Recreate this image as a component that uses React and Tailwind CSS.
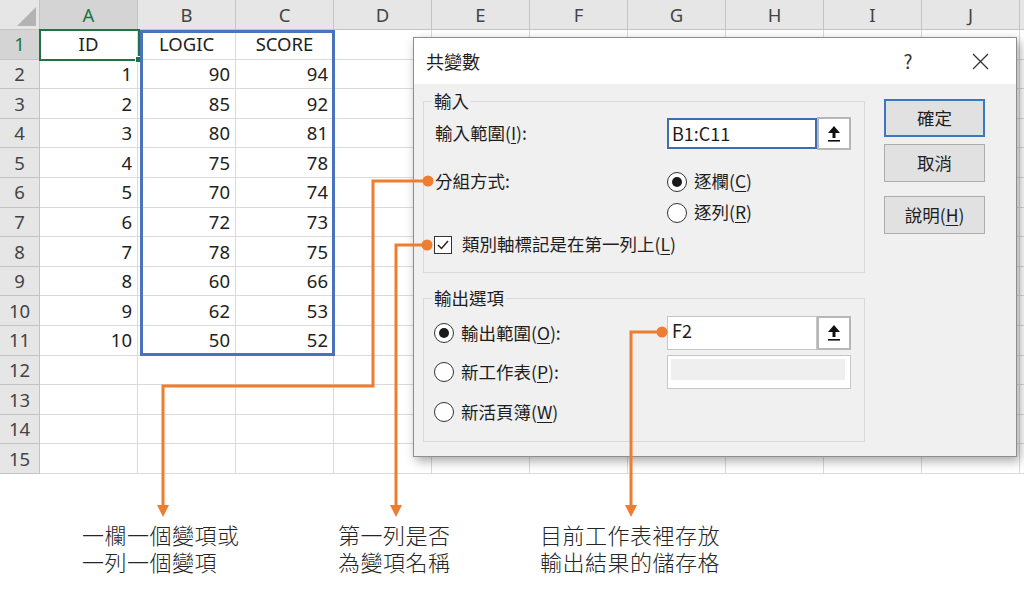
import React from "react";

const COLS = ["A", "B", "C", "D", "E", "F", "G", "H", "I", "J", ""];
const DATA = [
  ["ID", "LOGIC", "SCORE"],
  ["1", "90", "94"],
  ["2", "85", "92"],
  ["3", "80", "81"],
  ["4", "75", "78"],
  ["5", "70", "74"],
  ["6", "72", "73"],
  ["7", "78", "75"],
  ["8", "60", "66"],
  ["9", "62", "53"],
  ["10", "50", "52"],
];

function U({ c }) {
  return <span className="underline underline-offset-[3px] decoration-1">{c}</span>;
}

function Sheet() {
  return (
    <div className="relative font-['Noto_Sans',sans-serif] text-[18.5px] text-[#222]">
      <div className="flex h-[30px]">
        <div className="relative w-[40px] shrink-0 bg-[#e6e6e6] border-r border-b border-[#c4c4c4]">
          <svg className="absolute inset-0" width="40" height="30">
            <polygon points="36,7 36,26 17,26" fill="#b3b3b3" />
          </svg>
        </div>
        {COLS.map((c, i) => (
          <div
            key={i}
            className={
              i === 0
                ? "w-[98px] shrink-0 flex items-center justify-center bg-[#d4d4d4] text-[#217346] border-r border-b border-[#c4c4c4]"
                : "w-[98px] shrink-0 flex items-center justify-center bg-[#e6e6e6] text-[#444] border-r border-b border-[#c4c4c4]"
            }
          >
            {c}
          </div>
        ))}
      </div>
      {Array.from({ length: 15 }).map((_, r) => {
        const row = DATA[r] || [];
        return (
          <div key={r} className="flex h-[29.6px]">
            <div
              className={
                r === 0
                  ? "w-[40px] shrink-0 flex items-center justify-center bg-[#d4d4d4] text-[#217346] border-r border-b border-[#c4c4c4]"
                  : "w-[40px] shrink-0 flex items-center justify-center bg-[#e6e6e6] text-[#444] border-r border-b border-[#c4c4c4]"
              }
            >
              {r + 1}
            </div>
            {COLS.map((c, ci) => (
              <div
                key={ci}
                className={
                  r === 0
                    ? "w-[98px] shrink-0 flex items-center justify-center border-r border-b border-[#dadada]"
                    : "w-[98px] shrink-0 flex items-center justify-end pr-[5px] border-r border-b border-[#dadada]"
                }
              >
                {row[ci] || ""}
              </div>
            ))}
          </div>
        );
      })}
      <div className="absolute left-[39px] top-[29px] w-[101px] h-[32px] border-2 border-[#217346]">
        <div className="absolute -right-[4px] -bottom-[4px] w-[7px] h-[7px] bg-[#217346] border border-white" />
      </div>
      <div className="absolute left-[140px] top-[30px] w-[195px] h-[326px] border-[3px] border-[#4a72bd]" />
    </div>
  );
}

function Radio({ on }) {
  return (
    <div className="w-[20px] h-[20px] shrink-0 rounded-full border border-[#333] bg-white flex items-center justify-center">
      {on && <div className="w-[10px] h-[10px] rounded-full bg-[#1a1a1a]" />}
    </div>
  );
}

function PickBtn({ h }) {
  return (
    <div className={`w-[34px] ${h} shrink-0 border-2 border-[#b7b7b7] bg-white flex items-center justify-center`}>
      <svg width="14" height="18" viewBox="0 0 14 18">
        <polygon points="7,1 13,8 1,8" fill="#111" />
        <rect x="5.5" y="7" width="3" height="6" fill="#111" />
        <rect x="1" y="15" width="12" height="1.6" fill="#111" />
      </svg>
    </div>
  );
}

function Dialog() {
  return (
    <div className="absolute left-[413px] top-[37px] w-[604px] h-[420px] border border-[#8e8e8e] bg-[#f0f0f0] shadow-[3px_4px_10px_rgba(0,0,0,0.35)] flex flex-col font-['Noto_Sans_CJK_TC',sans-serif] text-[#1e1e1e]">
      <div className="h-[46px] bg-white flex items-center pl-[12px] pr-[14px]">
        <span className="text-[18px]">共變數</span>
        <div className="ml-auto flex items-center gap-[28px]">
          <div className="w-[44px] flex justify-center text-[19px] text-[#333]">?</div>
          <div className="w-[44px] flex justify-center">
            <svg width="17" height="17" viewBox="0 0 17 17">
              <path d="M1 1 L16 16 M16 1 L1 16" stroke="#333" strokeWidth="1.3" />
            </svg>
          </div>
        </div>
      </div>
      <div className="flex pl-[9px] pt-[15px] text-[17.5px]">
        <div className="w-[442px] shrink-0 pt-[2px]">
          <div className="relative h-[172px] border border-[#d9d9d9] pl-[11px] pr-[13px] pt-[15px]">
            <div className="absolute -top-[12px] left-[8px] px-[2px] bg-[#f0f0f0] leading-[22px]">輸入</div>
            <div className="flex items-center h-[33px]">
              <div className="w-[232px] shrink-0">
                輸入範圍(<U c="I" />):
              </div>
              <div className="w-[150px] h-[31px] shrink-0 border-2 border-[#3e6db3] bg-white flex items-center pl-[3px] text-[18px]">
                B1:C11
              </div>
              <PickBtn h="h-[33px]" />
            </div>
            <div className="flex mt-[16px]">
              <div className="w-[232px] shrink-0 h-[31px] flex items-center">分組方式:</div>
              <div className="flex flex-col">
                <div className="h-[31px] flex items-center gap-[7px]">
                  <Radio on />
                  <span>
                    逐欄(<U c="C" />)
                  </span>
                </div>
                <div className="h-[31px] flex items-center gap-[7px]">
                  <Radio />
                  <span>
                    逐列(<U c="R" />)
                  </span>
                </div>
              </div>
            </div>
            <div className="h-[33px] flex items-center gap-[10px] -ml-[1px]">
              <div className="w-[18px] h-[18px] border border-[#333] bg-white flex items-center justify-center">
                <svg width="14" height="14" viewBox="0 0 14 14">
                  <polyline points="2,7 5.5,10.5 12,3" fill="none" stroke="#222" strokeWidth="1.5" />
                </svg>
              </div>
              <span>
                類別軸標記是在第一列上(<U c="L" />)
              </span>
            </div>
          </div>
          <div className="relative mt-[25px] h-[144px] border border-[#d9d9d9] pl-[11px] pr-[13px] pt-[17px]">
            <div className="absolute -top-[12px] left-[8px] px-[2px] bg-[#f0f0f0] leading-[22px]">輸出選項</div>
            <div className="flex items-center h-[34px]">
              <div className="w-[232px] shrink-0 flex items-center gap-[7px] -ml-[1px]">
                <Radio on />
                <span>
                  輸出範圍(<U c="O" />):
                </span>
              </div>
              <div className="w-[150px] h-[34px] shrink-0 border border-[#c6c6c6] bg-white pl-[4px] pt-[1px] text-[18px] leading-[24px] ml-[1px]">
                F2
              </div>
              <PickBtn h="h-[34px]" />
            </div>
            <div className="flex items-center h-[34px] mt-[5px]">
              <div className="w-[232px] shrink-0 flex items-center gap-[7px] -ml-[1px]">
                <Radio />
                <span>
                  新工作表(<U c="P" />):
                </span>
              </div>
              <div className="w-[184px] h-[34px] shrink-0 border border-[#c6c6c6] bg-white flex p-[3px] pr-[5px] pb-[8px] ml-[1px]">
                <div className="flex-1 bg-[#efefef]" />
              </div>
            </div>
            <div className="flex items-center h-[34px] mt-[6px]">
              <div className="flex items-center gap-[7px] -ml-[1px]">
                <Radio />
                <span>
                  新活頁簿(<U c="W" />)
                </span>
              </div>
            </div>
          </div>
        </div>
        <div className="ml-[19px] w-[101px] flex flex-col">
          <div className="h-[38px] border-2 border-[#3a78c0] bg-[#e1e1e1] flex items-center justify-center">確定</div>
          <div className="h-[38px] mt-[7px] border border-[#adadad] bg-[#e1e1e1] flex items-center justify-center">取消</div>
          <div className="h-[38px] mt-[14px] border border-[#adadad] bg-[#e1e1e1] flex items-center justify-center">
            說明(<U c="H" />)
          </div>
        </div>
      </div>
    </div>
  );
}

function Callouts() {
  const o = "#ed7d31";
  return (
    <svg className="absolute left-0 top-0 pointer-events-none" width="1024" height="597">
      <path d="M428 181 H373 V386 H163 V508" fill="none" stroke={o} strokeWidth="3" />
      <circle cx="428" cy="181" r="5.5" fill={o} />
      <polygon points="157,505 169,505 163,517" fill={o} />
      <path d="M427 245 H396 V508" fill="none" stroke={o} strokeWidth="3" />
      <circle cx="427" cy="245" r="5.5" fill={o} />
      <polygon points="390,505 402,505 396,517" fill={o} />
      <path d="M662 332 H631 V508" fill="none" stroke={o} strokeWidth="3" />
      <circle cx="662" cy="332" r="5.5" fill={o} />
      <polygon points="625,505 637,505 631,517" fill={o} />
    </svg>
  );
}

function Caption({ a, b, w }) {
  return (
    <div className={`${w} shrink-0 flex flex-col`}>
      <div className="h-[27px] leading-[27px] whitespace-nowrap">{a}</div>
      <div className="h-[27px] leading-[27px] whitespace-nowrap">{b}</div>
    </div>
  );
}

export default function App() {
  return (
    <div className="relative w-[1024px] h-[597px] overflow-hidden bg-white">
      <Sheet />
      <div className="flex pt-[47px] pl-[82px] font-['Noto_Sans_CJK_TC',sans-serif] font-light text-[22px] tracking-[0.5px] text-[#262626]">
        <Caption w="w-[256px]" a="一欄一個變項或" b="一列一個變項" />
        <Caption w="w-[202px]" a="第一列是否" b="為變項名稱" />
        <Caption w="w-[240px]" a="目前工作表裡存放" b="輸出結果的儲存格" />
      </div>
      <Dialog />
      <Callouts />
    </div>
  );
}
